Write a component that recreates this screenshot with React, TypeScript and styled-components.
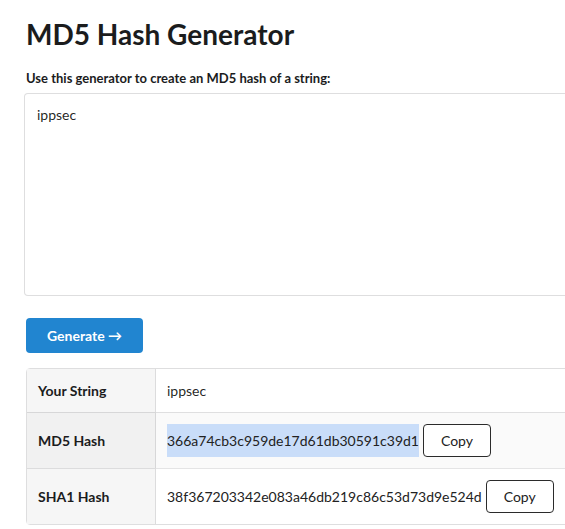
import React from "react";
import styled, { createGlobalStyle } from "styled-components";

const Global = createGlobalStyle`
  html, body { margin: 0; padding: 0; overflow: hidden; background: #ffffff; }
  body { font-family: Lato, "Helvetica Neue", Arial, sans-serif; color: #333333; font-size: 14px; }
`;

const Page = styled.div`
  width: 740px;
  padding: 16px 0 0 26px;
  box-sizing: border-box;
`;

const Title = styled.h1`
  margin: 0;
  font-family: Lato, sans-serif;
  font-size: 28px;
  line-height: 36px;
  font-weight: 700;
  color: #1b1c1d;
`;

const Field = styled.div`
  margin-top: 17px;
  display: flex;
  flex-direction: column;
`;

const Label = styled.label`
  font-size: 13px;
  font-weight: 700;
  line-height: 18px;
  color: #1b1c1d;
  margin-bottom: 6px;
`;

const TextArea = styled.textarea`
  margin-left: -2px;
  height: 203px;
  box-sizing: border-box;
  padding: 11px 12px;
  border: 1px solid rgba(34, 36, 38, 0.15);
  border-radius: 4px;
  font-family: Lato, sans-serif;
  font-size: 14px;
  line-height: 20px;
  color: rgba(0, 0, 0, 0.87);
  resize: none;
  outline: none;
`;

const PrimaryButton = styled.button`
  align-self: flex-start;
  margin-top: 22px;
  height: 35px;
  padding: 0 21px;
  border: none;
  border-radius: 4px;
  background: #2185d0;
  color: #ffffff;
  font-family: Lato, sans-serif;
  font-size: 14px;
  font-weight: 700;
  cursor: pointer;
`;

const Table = styled.table`
  margin-top: 15px;
  width: 100%;
  border-collapse: separate;
  border-spacing: 0;
  border: 1px solid rgba(34, 36, 38, 0.15);
  border-radius: 4px;
  font-size: 14px;
  color: rgba(0, 0, 0, 0.87);
`;

const Row = styled.tr<{ $striped?: boolean }>`
  background: ${(p) => (p.$striped ? "#fafafa" : "#ffffff")};
`;

const HeadCell = styled.td<{ $first?: boolean }>`
  width: 106px;
  padding: 11px;
  line-height: 21px;
  font-weight: 700;
  background: rgba(0, 0, 0, 0.035);
  border-right: 1px solid rgba(34, 36, 38, 0.12);
  border-top: ${(p) => (p.$first ? "none" : "1px solid rgba(34, 36, 38, 0.12)")};
  color: #1b1c1d;
`;

const ValueCell = styled.td<{ $first?: boolean }>`
  padding: 11px;
  line-height: 21px;
  border-top: ${(p) => (p.$first ? "none" : "1px solid rgba(34, 36, 38, 0.12)")};
`;

const ValueLine = styled.div`
  display: flex;
  align-items: stretch;
  height: 33px;
`;

const HashText = styled.span<{ $selected?: boolean }>`
  display: flex;
  align-items: center;
  background: ${(p) => (p.$selected ? "#c9ddf9" : "transparent")};
  color: #222222;
`;

const CopyButton = styled.button`
  margin-left: 4px;
  width: 68px;
  height: 33px;
  box-sizing: border-box;
  border: 1px solid #2b2b2b;
  border-radius: 4px;
  background: #ffffff;
  color: #222222;
  font-family: Lato, sans-serif;
  font-size: 14px;
  cursor: pointer;
`;

export default function App() {
  return (
    <>
      <Global />
      <Page>
        <Title>MD5 Hash Generator</Title>
        <Field>
          <Label>Use this generator to create an MD5 hash of a string:</Label>
          <TextArea defaultValue="ippsec" />
          <PrimaryButton>Generate →</PrimaryButton>
        </Field>
        <Table>
          <tbody>
            <Row>
              <HeadCell $first>Your String</HeadCell>
              <ValueCell $first>ippsec</ValueCell>
            </Row>
            <Row $striped>
              <HeadCell>MD5 Hash</HeadCell>
              <ValueCell>
                <ValueLine>
                  <HashText $selected>366a74cb3c959de17d61db30591c39d1</HashText>
                  <CopyButton>Copy</CopyButton>
                </ValueLine>
              </ValueCell>
            </Row>
            <Row>
              <HeadCell>SHA1 Hash</HeadCell>
              <ValueCell>
                <ValueLine>
                  <HashText>38f367203342e083a46db219c86c53d73d9e524d</HashText>
                  <CopyButton>Copy</CopyButton>
                </ValueLine>
              </ValueCell>
            </Row>
          </tbody>
        </Table>
      </Page>
    </>
  );
}
